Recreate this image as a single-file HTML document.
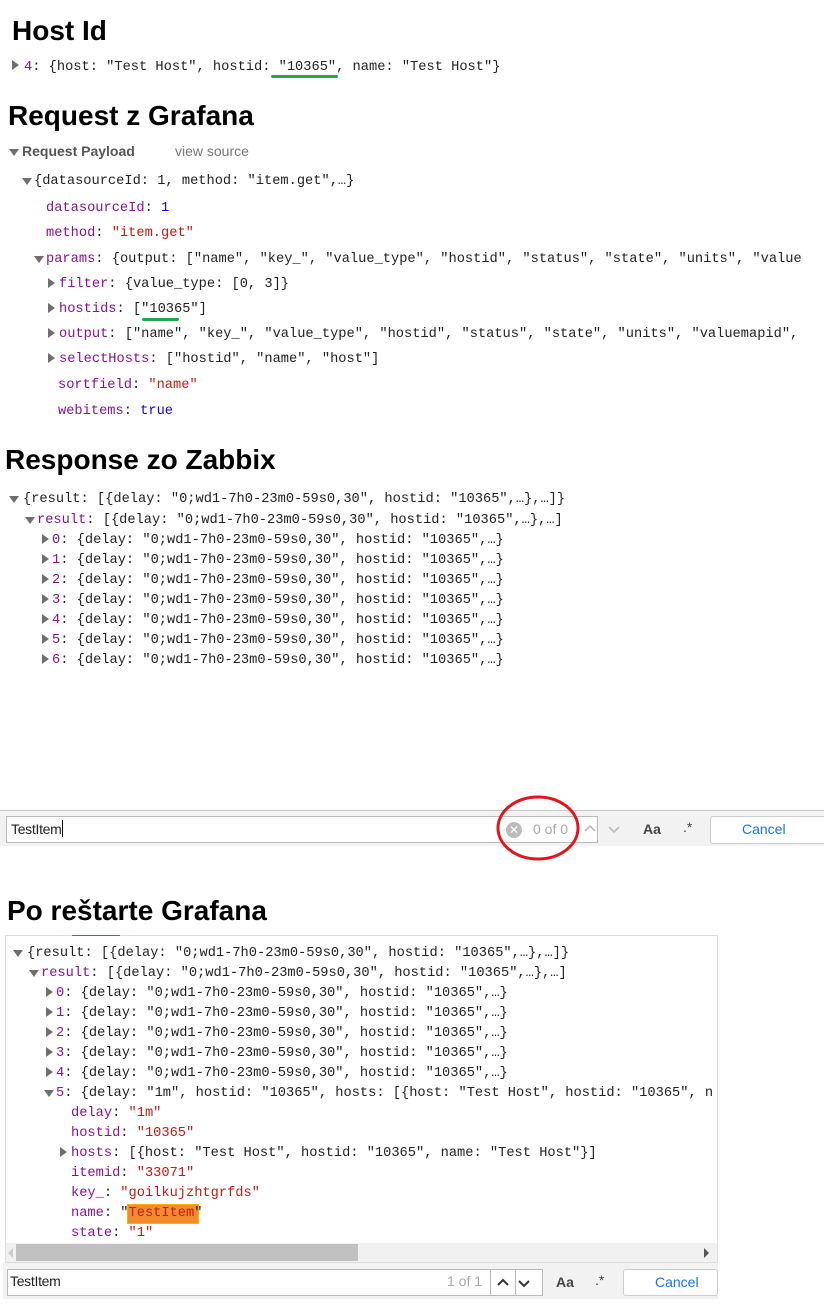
<!DOCTYPE html>
<html><head><meta charset="utf-8"><style>
*{margin:0;padding:0;box-sizing:border-box}
body{width:824px;height:1314px;background:#fff;position:relative;overflow:hidden;font-family:"Liberation Sans",sans-serif}
.l{position:absolute;white-space:pre;font-family:"Liberation Mono",monospace;font-size:13.7px;line-height:20px;color:#222;height:20px;margin-top:3px}
.k{color:#881391}.s{color:#c41a16}.n{color:#1c00cf}
.h{position:absolute;font-weight:bold;font-size:28px;color:#000;white-space:pre;line-height:32px}
.t{position:absolute;width:0;height:0;border-style:solid;margin-top:3px}
.tr{border-width:5px 0 5px 7px;border-color:transparent transparent transparent #6e6e6e}
.td{border-width:7px 5px 0 5px;border-color:#6e6e6e transparent transparent transparent}
.hl{position:absolute;margin-top:3px}
</style></head><body>

<div class="h" style="left:12px;top:15px">Host Id</div>
<div class="t tr" style="left:12px;top:57px"></div>
<div class="l" style="left:24px;top:55px"><span class="k">4</span>: {host: "Test Host", hostid: "10365", name: "Test Host"}</div>
<div style="position:absolute;left:271px;top:75px;width:67px;height:3px;background:#1fa84a;border-radius:2px"></div>

<div class="h" style="left:8px;top:100px">Request z Grafana</div>
<div class="t td" style="left:9px;top:146px"></div>
<div style="position:absolute;left:22px;top:143px;font-size:14px;font-weight:bold;color:#555">Request Payload</div>
<div style="position:absolute;left:175px;top:143px;font-size:14px;color:#777">view source</div>
<div class="t td" style="left:22px;top:175px"></div>
<div class="l" style="left:34px;top:169px">{datasourceId: 1, method: "item.get",…}</div>
<div class="l" style="left:46px;top:196px"><span class="k">datasourceId</span>: <span class="n">1</span></div>
<div class="l" style="left:46px;top:221px"><span class="k">method</span>: <span class="s">"item.get"</span></div>
<div class="t td" style="left:34px;top:253px"></div>
<div class="l" style="left:46px;top:247px;width:762px;overflow:hidden"><span class="k">params</span>: {output: ["name", "key_", "value_type", "hostid", "status", "state", "units", "value</div>
<div class="t tr" style="left:48px;top:275px"></div>
<div class="l" style="left:59px;top:272px"><span class="k">filter</span>: {value_type: [0, 3]}</div>
<div class="t tr" style="left:48px;top:300px"></div>
<div class="l" style="left:59px;top:297px"><span class="k">hostids</span>: ["10365"]</div>
<div style="position:absolute;left:142px;top:318px;width:37px;height:3px;background:#1fa84a;border-radius:2px"></div>
<div class="t tr" style="left:48px;top:325px"></div>
<div class="l" style="left:59px;top:322px"><span class="k">output</span>: ["name", "key_", "value_type", "hostid", "status", "state", "units", "valuemapid",</div>
<div class="t tr" style="left:48px;top:350px"></div>
<div class="l" style="left:59px;top:347px"><span class="k">selectHosts</span>: ["hostid", "name", "host"]</div>
<div class="l" style="left:58px;top:373px"><span class="k">sortfield</span>: <span class="s">"name"</span></div>
<div class="l" style="left:58px;top:399px"><span class="k">webitems</span>: <span class="n">true</span></div>

<div class="h" style="left:5px;top:444px">Response zo Zabbix</div>
<div class="t td" style="left:9px;top:493px"></div>
<div class="l" style="left:23px;top:487px">{result: [{delay: "0;wd1-7h0-23m0-59s0,30", hostid: "10365",…},…]}</div>
<div class="t td" style="left:25px;top:514px"></div>
<div class="l" style="left:37px;top:508px"><span class="k">result</span>: [{delay: "0;wd1-7h0-23m0-59s0,30", hostid: "10365",…},…]</div>
<div id="r1"></div>

<!-- find bar 1 -->
<div style="position:absolute;left:0;top:810px;width:824px;height:36px;background:#f2f2f2;border-top:1px solid #ccc"></div>
<div style="position:absolute;left:6px;top:816px;width:592px;height:27px;background:#fff;border:1px solid #bbb"></div>
<div style="position:absolute;left:11px;top:820px;font-size:14px;color:#222;letter-spacing:-0.3px">TestItem<span style="display:inline-block;width:1px;height:17px;background:#000;vertical-align:-3px"></span></div>
<div style="position:absolute;left:506px;top:822px;width:16px;height:16px;border-radius:50%;background:#bbb;color:#fff;font-size:12px;line-height:16px;text-align:center">✕</div>
<div style="position:absolute;left:533px;top:821px;font-size:14px;color:#aaa">0 of 0</div>
<svg style="position:absolute;left:582px;top:822px" width="40" height="14"><path d="M3 9 L8 4 L13 9" fill="none" stroke="#bbb" stroke-width="1.6"/><path d="M27 5 L32 10 L37 5" fill="none" stroke="#bbb" stroke-width="1.6"/></svg>
<div style="position:absolute;left:643px;top:821px;font-size:14px;font-weight:bold;color:#444">Aa</div>
<div style="position:absolute;left:683px;top:819px;font-size:14px;color:#444">.*</div>
<div style="position:absolute;left:710px;top:816px;width:120px;height:28px;background:#fff;border:1px solid #ccc;border-radius:3px"></div>
<div style="position:absolute;left:742px;top:821px;font-size:14px;color:#1a73e8">Cancel</div>
<svg style="position:absolute;left:494px;top:794px" width="90" height="70"><ellipse cx="44" cy="34" rx="40" ry="31" fill="none" stroke="#e0161e" stroke-width="3"/></svg>

<div class="h" style="left:7px;top:895px">Po reštarte Grafana</div>
<div style="position:absolute;left:5px;top:935px;width:713px;height:328px;border:1px solid #ddd"></div>
<div style="position:absolute;left:72px;top:935px;width:48px;height:1px;background:#1a73e8"></div>
<div class="t td" style="left:13px;top:947px"></div>
<div class="l" style="left:27px;top:941px">{result: [{delay: "0;wd1-7h0-23m0-59s0,30", hostid: "10365",…},…]}</div>
<div class="t td" style="left:29px;top:967px"></div>
<div class="l" style="left:41px;top:961px"><span class="k">result</span>: [{delay: "0;wd1-7h0-23m0-59s0,30", hostid: "10365",…},…]</div>
<div id="r2"></div>
<div class="t td" style="left:44px;top:1087px"></div>
<div class="l" style="left:56px;top:1081px;width:660px;overflow:hidden"><span class="k">5</span>: {delay: "1m", hostid: "10365", hosts: [{host: "Test Host", hostid: "10365", n</div>
<div class="l" style="left:71px;top:1101px"><span class="k">delay</span>: <span class="s">"1m"</span></div>
<div class="l" style="left:71px;top:1121px"><span class="k">hostid</span>: <span class="s">"10365"</span></div>
<div class="t tr" style="left:60px;top:1144px"></div>
<div class="l" style="left:71px;top:1141px"><span class="k">hosts</span>: [{host: "Test Host", hostid: "10365", name: "Test Host"}]</div>
<div class="l" style="left:71px;top:1161px"><span class="k">itemid</span>: <span class="s">"33071"</span></div>
<div class="l" style="left:71px;top:1181px"><span class="k">key_</span>: <span class="s">"goilkujzhtgrfds"</span></div>
<div class="hl" style="left:127px;top:1201px;width:72px;height:20px;background:#f28c2c;border:1px solid #f5b400"></div>
<div class="l" style="left:71px;top:1201px"><span class="k">name</span>: "<span class="s">TestItem</span>"</div>
<div class="l" style="left:71px;top:1221px"><span class="k">state</span>: <span class="s">"1"</span></div>
<!-- scrollbar -->
<div style="position:absolute;left:6px;top:1243px;width:711px;height:19px;background:#f1f1f1"></div>
<div style="position:absolute;left:16px;top:1244px;width:342px;height:17px;background:#c1c1c1"></div>
<div style="position:absolute;left:8px;top:1248px;width:0;height:0;border-style:solid;border-width:5px 5px 5px 0;border-color:transparent #ccc transparent transparent"></div>
<div style="position:absolute;left:704px;top:1248px;width:0;height:0;border-style:solid;border-width:5px 0 5px 5px;border-color:transparent transparent transparent #555"></div>
<!-- find bar 2 -->
<div style="position:absolute;left:3px;top:1263px;width:715px;height:36px;background:#f2f2f2"></div>
<div style="position:absolute;left:7px;top:1269px;height:27px;background:#fff;border:1px solid #bbb;width:536px"></div>
<div style="position:absolute;left:10px;top:1273px;font-size:14px;color:#222;letter-spacing:-0.3px">TestItem</div>
<div style="position:absolute;left:447px;top:1273px;font-size:14px;color:#aaa">1 of 1</div>
<div style="position:absolute;left:490px;top:1269px;width:1px;height:27px;background:#bbb"></div>
<div style="position:absolute;left:515px;top:1269px;width:1px;height:27px;background:#bbb"></div>
<svg style="position:absolute;left:495px;top:1276px" width="44" height="14"><path d="M3 9 L8 4 L13 9" fill="none" stroke="#333" stroke-width="2"/><path d="M24 5 L29 10 L34 5" fill="none" stroke="#333" stroke-width="2"/></svg>
<div style="position:absolute;left:556px;top:1274px;font-size:14px;font-weight:bold;color:#444">Aa</div>
<div style="position:absolute;left:595px;top:1272px;font-size:14px;color:#444">.*</div>
<div style="position:absolute;left:623px;top:1269px;width:95px;height:27px;background:#fff;border:1px solid #ccc;border-radius:3px"></div>
<div style="position:absolute;left:655px;top:1274px;font-size:14px;color:#1a73e8">Cancel</div>

<script>
function rows(id,tx,lx,ty,n){var h='';for(var i=0;i<n;i++){var y=ty+i*20;h+='<div class="t tr" style="left:'+tx+'px;top:'+(y+3)+'px"></div><div class="l" style="left:'+lx+'px;top:'+y+'px"><span class="k">'+i+'</span>: {delay: "0;wd1-7h0-23m0-59s0,30", hostid: "10365",…}</div>';}document.getElementById(id).outerHTML=h;}
rows('r1',42,52,528,7);
rows('r2',46,56,981,5);
</script>
</body></html>
